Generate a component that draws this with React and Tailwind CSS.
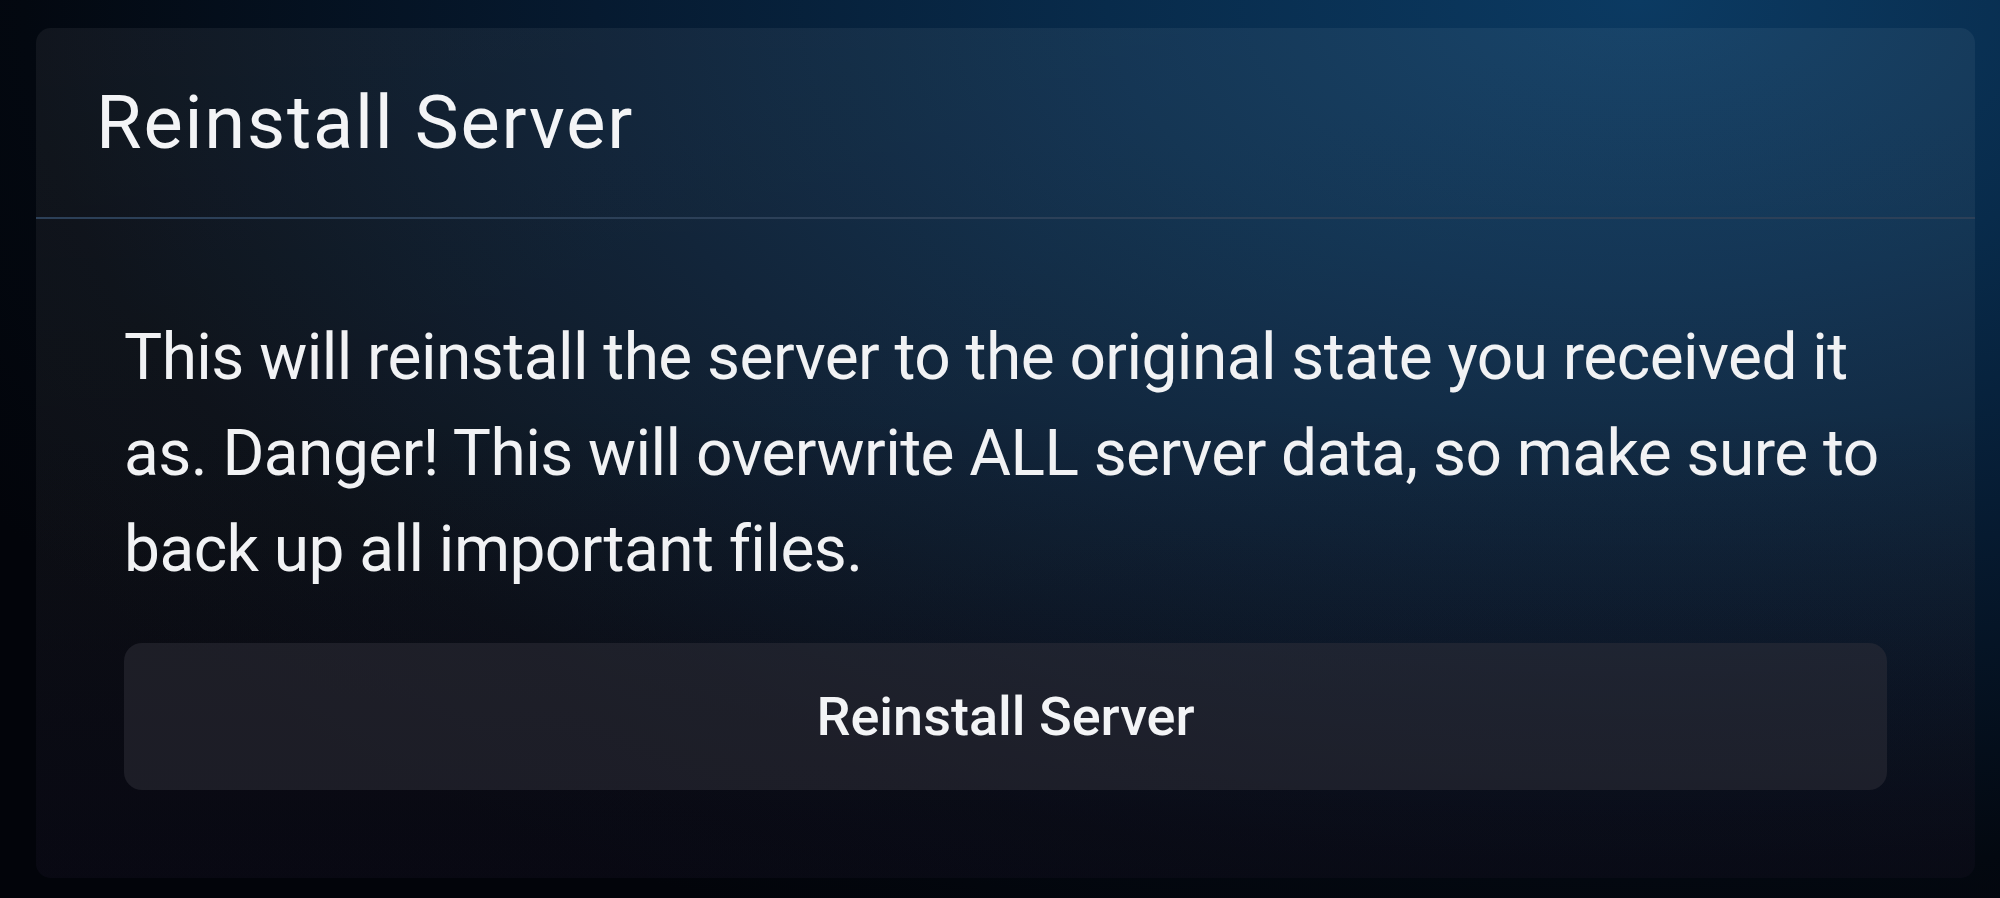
export default function App() {
  return (
    <div
      className="w-[2000px] h-[898px] overflow-hidden bg-[#02050b] bg-[radial-gradient(ellipse_95%_115%_at_82%_0%,#0b3a62_0%,#082b4b_28%,#061a30_55%,#030810_85%,#02040a_100%)] pl-[36px] pr-[25px] pt-[28px] pb-[20px]"
      style={{ fontFamily: 'Roboto, "Noto Sans", sans-serif' }}
    >
      <div className="relative h-[850px] rounded-[15px] overflow-hidden bg-[linear-gradient(180deg,rgba(255,255,255,0.055)_0%,rgba(255,255,255,0.045)_60%,rgba(60,50,90,0.12)_100%)]">
        <div className="absolute inset-0 bg-[linear-gradient(180deg,rgba(0,0,0,0)_0%,rgba(0,0,0,0)_45%,rgba(8,8,18,0.45)_100%)] pointer-events-none" />
        <div className="relative flex flex-col h-full">
          <div className="h-[191px] flex items-center pl-[60px] border-b-2 border-[#2c4058]">
            <h2 className="text-[74px] leading-none font-normal tracking-[1.8px] text-[#f3f4f6]">Reinstall Server</h2>
          </div>
          <div className="px-[88px] pt-[91px]">
            <p className="text-[64px] leading-[96px] tracking-[-0.55px] mr-[-12px] text-[#f1f2f4]">
              This will reinstall the server to the original state you received it as. Danger! This will overwrite ALL server data, so make sure to back up all important files.
            </p>
            <div className="mt-[45px] h-[147px] rounded-[18px] bg-[rgba(48,48,58,0.5)] flex items-center justify-center">
              <span className="text-[54px] font-medium text-[#f3f4f6]">Reinstall Server</span>
            </div>
          </div>
        </div>
      </div>
    </div>
  );
}
